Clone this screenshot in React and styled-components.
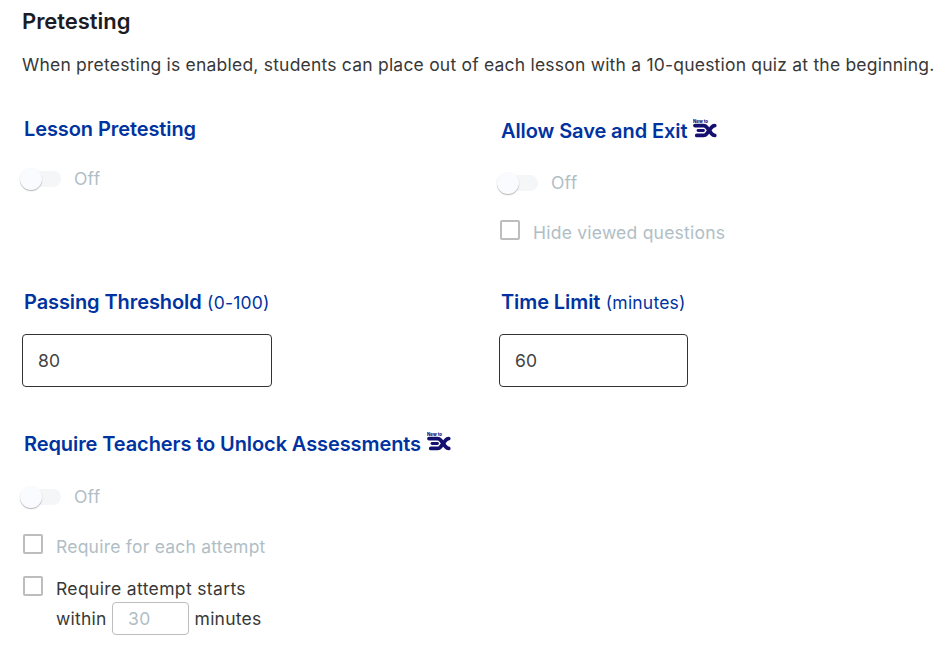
import React, { useState } from "react";
import styled, { createGlobalStyle } from "styled-components";

const ExtendedMark = () => (
  <Mark viewBox="0 0 24 20" aria-hidden="true">
    <text
      x="0"
      y="3.8"
      fontSize="4.6"
      fontWeight="800"
      textLength="15"
      lengthAdjust="spacingAndGlyphs"
    >
      New to
    </text>
    <g fill="none" stroke="currentColor" strokeLinecap="round" strokeWidth="3.8">
      <path d="M2 6.6H10.5Q12.4 6.6 13.6 8.2L18.7 14.8Q20 16.4 21.7 16.4" />
      <path d="M5 11.5H10.5" strokeWidth="2.8" />
      <path d="M3.8 16.4H10.5Q12.4 16.4 13.6 14.8L18.7 8.2Q20 6.6 21.7 6.6" />
    </g>
  </Mark>
);

const ToggleField = () => {
  const [on, setOn] = useState(false);

  return (
    <ToggleRow>
      <Track
        type="button"
        role="switch"
        aria-checked={on}
        onClick={() => setOn(!on)}
      >
        <Knob $on={on} />
      </Track>
      <ToggleText>{on ? "On" : "Off"}</ToggleText>
    </ToggleRow>
  );
};

const NumberField = ({ initial, ...props }) => {
  const [value, setValue] = useState(initial);

  return (
    <Input
      type="text"
      value={value}
      onChange={(e) => setValue(e.target.value)}
      {...props}
    />
  );
};

const App = () => {
  return (
    <>
      <GlobalStyle />
      <Page>
        <Title>Pretesting</Title>
        <Description>
          When pretesting is enabled, students can place out of each lesson with
          a 10-question quiz at the beginning.
        </Description>

        <Row $height={173}>
          <Column>
            <Label>Lesson Pretesting</Label>
            <Toggle $top={23}>
              <ToggleField />
            </Toggle>
          </Column>
          <Column>
            <Label $top={2}>
              Allow Save and Exit
              <ExtendedMark />
            </Label>
            <Toggle $top={25}>
              <ToggleField />
            </Toggle>
            <CheckRow $top={23}>
              <Checkbox type="checkbox" />
              <CheckText $muted>Hide viewed questions</CheckText>
            </CheckRow>
          </Column>
        </Row>

        <Row $height={142}>
          <Column>
            <Label>
              Passing Threshold <Hint>(0-100)</Hint>
            </Label>
            <NumberField initial="80" $width={250} />
          </Column>
          <Column>
            <Label>
              Time Limit <Hint>(minutes)</Hint>
            </Label>
            <NumberField initial="60" $width={189} />
          </Column>
        </Row>

        <Column>
          <Label>
            Require Teachers to Unlock Assessments
            <ExtendedMark />
          </Label>
          <Toggle $top={26}>
            <ToggleField />
          </Toggle>
          <CheckRow $top={23}>
            <Checkbox type="checkbox" />
            <CheckText $muted>Require for each attempt</CheckText>
          </CheckRow>
          <CheckRow $top={12}>
            <Checkbox type="checkbox" />
            <CheckText>
              <Lead>Require attempt starts</Lead>
              <Within>
                within
                <NumberField initial="30" $small />
                minutes
              </Within>
            </CheckText>
          </CheckRow>
        </Column>
      </Page>
    </>
  );
};

export default App;

const GlobalStyle = createGlobalStyle`
  * {
    box-sizing: border-box;
  }
  body {
    margin: 0;
    background: #fff;
    color: #383838;
    font-family: Inter, "Liberation Sans", sans-serif;
    font-size: 17.5px;
    font-weight: 400;
    letter-spacing: 0.23px;
  }
`;

const Page = styled.main`
  padding: 6px 0 30px 22px;
`;

const Title = styled.h2`
  margin: 0;
  color: #1c1c24;
  font-size: 22px;
  font-weight: 600;
  line-height: 30px;
  letter-spacing: -0.05px;
`;

const Description = styled.p`
  margin: 14px 0 34px;
  line-height: 30px;
  letter-spacing: 0.21px;
  white-space: nowrap;
`;

const Row = styled.div`
  display: grid;
  grid-template-columns: 477px 1fr;
  height: ${({ $height }) => $height}px;
`;

const Column = styled.section`
  display: flex;
  flex-direction: column;
  align-items: flex-start;
`;

const Label = styled.h3`
  display: flex;
  align-items: baseline;
  margin: ${({ $top = 0 }) => $top}px 0 0 2px;
  height: 30px;
  color: #0033a0;
  font-size: 20px;
  font-weight: 600;
  line-height: 30px;
  letter-spacing: -0.09px;
  white-space: nowrap;
`;

const Hint = styled.span`
  margin-left: 5.5px;
  font-size: 17.5px;
  font-weight: 400;
  letter-spacing: 0.2px;
`;

const Mark = styled.svg`
  align-self: flex-start;
  width: 24px;
  height: 20px;
  margin: 3px 0 0 5.5px;
  color: #15106f;
  fill: currentColor;
  letter-spacing: 0;
`;

const Toggle = styled.div`
  margin-top: ${({ $top }) => $top}px;
`;

const ToggleRow = styled.div`
  display: flex;
  align-items: center;
  height: 24px;
`;

const Track = styled.button`
  display: flex;
  align-items: center;
  width: 39px;
  height: 16px;
  padding: 0;
  border: none;
  border-radius: 8px;
  background: #f5f6f8;
  cursor: pointer;
`;

const Knob = styled.span`
  flex: none;
  width: 22px;
  height: 22px;
  margin-left: ${({ $on }) => ($on ? 19 : -2)}px;
  border-radius: 50%;
  background: #fafbff;
  box-shadow: 0 1px 1px rgba(0, 0, 0, 0.25), 0 1px 2px rgba(0, 0, 0, 0.06);
`;

const ToggleText = styled.span`
  margin-left: 13px;
  color: #b0bec5;
  line-height: 24px;
  padding-bottom: 1px;
`;

const CheckRow = styled.label`
  display: flex;
  align-items: flex-start;
  margin-top: ${({ $top }) => $top}px;
`;

const Checkbox = styled.input`
  appearance: none;
  width: 20px;
  height: 20px;
  margin: 2px 13px 0 1px;
  border: 2px solid #bdbdbd;
  border-radius: 2px;
  background: #fff;
  &:checked {
    background: #0033a0;
  }
`;

const CheckText = styled.span`
  color: ${({ $muted }) => ($muted ? "#b0bec5" : "#383838")};
  line-height: 30px;
`;

const Lead = styled.span`
  display: block;
  letter-spacing: 0.36px;
`;

const Within = styled.span`
  display: flex;
  align-items: center;
  gap: 5.5px;
  height: 30px;
`;

const Input = styled.input`
  width: ${({ $small, $width }) => ($small ? 77 : $width)}px;
  height: ${({ $small }) => ($small ? 33 : 53)}px;
  margin-top: ${({ $small }) => ($small ? -1 : 17)}px;
  padding: 0 15px;
  border: 1px solid ${({ $small }) => ($small ? "#bdbdbd" : "#333")};
  border-radius: 4px;
  outline: none;
  background: #fff;
  color: ${({ $small }) => ($small ? "#b0bec5" : "#424242")};
  font: inherit;
  letter-spacing: inherit;
`;
